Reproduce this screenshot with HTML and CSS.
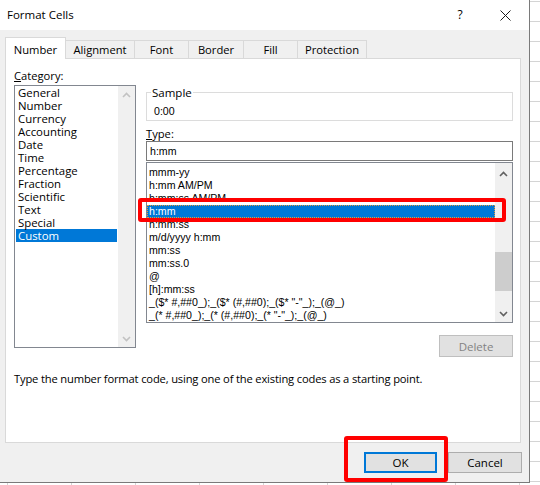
FILE: index.html
```html
<!DOCTYPE html>
<html>
<head>
<meta charset="utf-8">
<link rel="stylesheet" href="styles.css">
</head>
<body>
<div class="dialog">
  <div class="titlebar">
    <span class="title">Format Cells</span>
    <span class="help">?</span>
    <svg class="close" width="11" height="11" viewBox="0 0 11 11"><path d="M0.5 0.5 L10.5 10.5 M10.5 0.5 L0.5 10.5" stroke="#1a1a1a" stroke-width="1" fill="none"/></svg>
  </div>
  <div class="body">
    <div class="tabs">
      <div class="tab tab-active w-number">Number</div>
      <div class="tab w-alignment">Alignment</div>
      <div class="tab w-font">Font</div>
      <div class="tab w-border">Border</div>
      <div class="tab w-fill">Fill</div>
      <div class="tab w-protection">Protection</div>
    </div>
    <div class="panel">
      <div class="columns">
        <div class="col-left">
          <div class="label"><u>C</u>ategory:</div>
          <div class="listbox cat-list">
            <div class="list-items">
              <div class="item">General</div>
              <div class="item">Number</div>
              <div class="item">Currency</div>
              <div class="item">Accounting</div>
              <div class="item">Date</div>
              <div class="item">Time</div>
              <div class="item">Percentage</div>
              <div class="item">Fraction</div>
              <div class="item">Scientific</div>
              <div class="item">Text</div>
              <div class="item">Special</div>
              <div class="item item-selected">Custom</div>
            </div>
            <div class="scrollbar">
              <div class="sb-btn"><svg width="9" height="6" viewBox="0 0 9 6"><path d="M1 5 L4.5 1.5 L8 5" fill="none" stroke="#c2c2c2" stroke-width="1.6"/></svg></div>
              <div class="sb-track"></div>
              <div class="sb-btn"><svg width="9" height="6" viewBox="0 0 9 6"><path d="M1 1 L4.5 4.5 L8 1" fill="none" stroke="#c2c2c2" stroke-width="1.6"/></svg></div>
            </div>
          </div>
        </div>
        <div class="col-right">
          <fieldset class="sample">
            <legend>Sample</legend>
            <div class="sample-value">0:00</div>
          </fieldset>
          <div class="label type-label"><u>T</u>ype:</div>
          <div class="type-input">h:mm</div>
          <div class="listbox type-list">
            <div class="list-items code-items">
              <div class="citem">mmm-yy</div>
              <div class="citem">h:mm AM/PM</div>
              <div class="citem">h:mm:ss AM/PM</div>
              <div class="citem citem-selected">h:mm</div>
              <div class="citem">h:mm:ss</div>
              <div class="citem">m/d/yyyy h:mm</div>
              <div class="citem">mm:ss</div>
              <div class="citem">mm:ss.0</div>
              <div class="citem">@</div>
              <div class="citem">[h]:mm:ss</div>
              <div class="citem">_($* #,##0_);_($* (#,##0);_($* "-"_);_(@_)</div>
              <div class="citem">_(* #,##0_);_(* (#,##0);_(* "-"_);_(@_)</div>
            </div>
            <div class="scrollbar">
              <div class="sb-btn sb-up"><svg width="9" height="6" viewBox="0 0 9 6"><path d="M1 5 L4.5 1.5 L8 5" fill="none" stroke="#606060" stroke-width="1.6"/></svg></div>
              <div class="sb-track"><div class="sb-thumb"></div></div>
              <div class="sb-btn"><svg width="9" height="6" viewBox="0 0 9 6"><path d="M1 1 L4.5 4.5 L8 1" fill="none" stroke="#606060" stroke-width="1.6"/></svg></div>
            </div>
          </div>
          <div class="delete-row"><button class="btn btn-delete">Delete</button></div>
        </div>
      </div>
      <p class="desc">Type the number format code, using one of the existing codes as a starting point.</p>
    </div>
    <div class="buttons">
      <button class="btn btn-ok">OK</button>
      <button class="btn btn-cancel">Cancel</button>
    </div>
  </div>
  <div class="callout callout-type"></div>
  <div class="callout callout-ok"></div>
</div>
</body>
</html>
```
FILE: styles.css
```css
* { box-sizing: border-box; }
html, body { margin: 0; padding: 0; }
body {
  width: 540px;
  height: 485px;
  overflow: hidden;
  background-color: #fff;
  background-image: linear-gradient(to bottom, #d4d4d4 1px, transparent 1px), linear-gradient(to right, #d4d4d4 1px, transparent 1px);
  background-size: 100% 20px, 64px 100%;
  background-position: 0 21px, 7px 0;
  font-family: "Open Sans", "Noto Sans", sans-serif;
  font-size: 11.2px;
  color: #000;
}
.dialog {
  position: relative;
  width: 530px;
  height: 483px;
  border-right: 1px solid #7a7a7a;
  border-bottom: 1px solid #7a7a7a;
  background: #f0f0f0;
  display: flex;
  flex-direction: column;
}
.titlebar {
  height: 30px;
  flex: none;
  background: #fff;
  display: flex;
  align-items: center;
  padding: 0 18px 0 7px;
}
.title { flex: 1; line-height: 14px; font-size: 11.5px; }
.help { width: 14px; text-align: center; font-size: 12px; line-height: 14px; }
.close { margin-left: 33px; flex: none; }
.body { flex: 1; padding: 7px 0 0 5px; display: flex; flex-direction: column; }
.tabs { display: flex; align-items: flex-end; height: 21px; flex: none; }
.tab {
  height: 18px;
  border: 1px solid #d9d9d9;
  border-bottom: none;
  padding-top: 2px;
  line-height: 13px;
  text-align: center;
  margin-left: -1px;
  background: #f0f0f0;
  white-space: nowrap;
}
.tab-active {
  height: 22px;
  padding-top: 5px;
  margin-left: 0;
  margin-bottom: -1px;
  background: #fff;
  position: relative;
  z-index: 1;
}
.w-number { width: 61px; }
.w-alignment { width: 70px; }
.w-font { width: 55px; }
.w-border { width: 56px; }
.w-fill { width: 55px; }
.w-protection { width: 70px; }
.panel {
  width: 516px;
  height: 385px;
  flex: none;
  border: 1px solid #d9d9d9;
  background: #fff;
  padding: 10px 7px 0 8px;
}
.columns { display: flex; gap: 10px; align-items: flex-start; }
.col-left { width: 122px; }
.col-right { width: 367px; padding-top: 17px; display: flex; flex-direction: column; }
.label { line-height: 13px; }
.listbox { display: flex; border: 1px solid #828790; background: #fff; }
.list-items { flex: 1; min-width: 0; overflow: hidden; }
.cat-list { margin-top: 3px; height: 263px; }
.item { height: 13px; line-height: 13px; margin: 0 1px; padding-left: 2px; white-space: nowrap; font-size: 11.4px; }
.item-selected { background: #0078d7; color: #fff; }
.scrollbar { width: 17px; flex: none; background: #f0f0f0; display: flex; flex-direction: column; }
.sb-btn { height: 17px; flex: none; display: flex; align-items: center; justify-content: center; }
.sb-up { padding-top: 4px; }
.sb-track { flex: 1; }
.sb-thumb { margin-top: 72px; height: 39px; background: #cdcdcd; }
.sample {
  margin: 0;
  min-width: 0;
  border: 1px solid #dcdcdc;
  padding: 6px 0 2px 4px;
}
.sample legend { padding: 0 1px; line-height: 13px; font-size: 11.5px; }
.sample-value, .type-input, .code-items {
  font-family: "Liberation Sans", Arial, sans-serif;
  font-size: 10.6px;
}
.sample-value { line-height: 13px; margin-left: 3px; }
.type-label { margin-top: 6px; }
.type-input {
  margin-top: 1px;
  height: 20px;
  border: 1px solid #7a7a7a;
  background: #fff;
  padding-left: 3px;
  line-height: 18px;
}
.type-list { margin-top: 1px; height: 161px; }
.code-items { padding-top: 3px; }
.citem { height: 13px; line-height: 13px; padding-left: 2px; white-space: nowrap; }
.citem-selected {
  background: #0078d7;
  color: #fff;
  border: 1px dotted #e39a3b;
  line-height: 11px;
  padding-left: 1px;
}
.delete-row { display: flex; justify-content: flex-end; margin-top: 12px; }
.btn {
  font-family: inherit;
  font-size: 11.5px;
  height: 21px;
  padding: 0;
  background: #e1e1e1;
  border: 1px solid #adadad;
  color: #000;
}
.btn-delete { width: 74px; height: 22px; color: #838383; border-color: #bfbfbf; background: #e1e1e1; }
.desc { margin: 15px 0 0; line-height: 13px; letter-spacing: -0.17px; }
.buttons { display: flex; justify-content: flex-end; gap: 11px; padding: 9px 7px 0 0; }
.btn-ok { width: 73px; border-color: #0078d7; box-shadow: inset 0 0 0 1px #0078d7; }
.btn-cancel { width: 74px; }
.callout {
  position: absolute;
  border: 4px solid #ff0000;
  border-radius: 3px;
}
.callout-type { left: 138px; top: 198px; width: 368px; height: 24px; }
.callout-ok { left: 344px; top: 436px; width: 104px; height: 46px; }
```
